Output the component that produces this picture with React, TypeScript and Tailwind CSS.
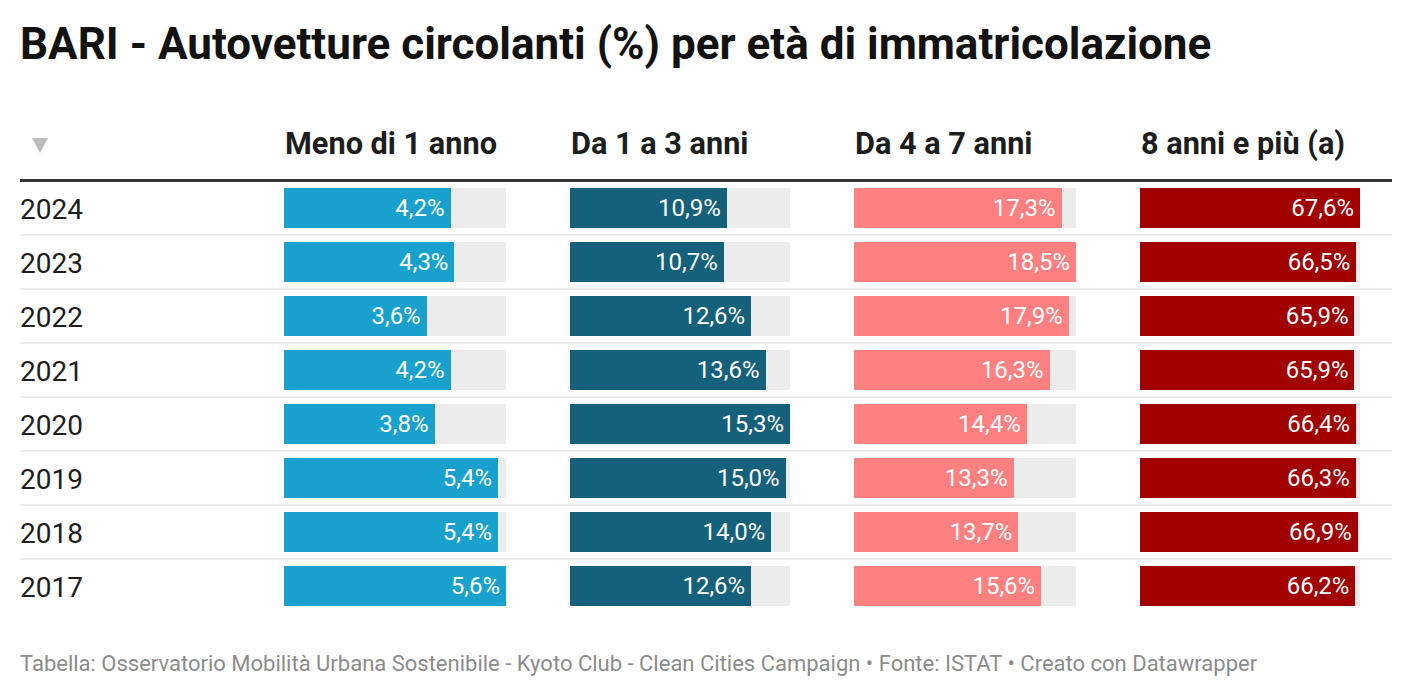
const columns = [
  { label: "Meno di 1 anno", color: "bg-[#18a1cd]", track: "w-[222px]" },
  { label: "Da 1 a 3 anni", color: "bg-[#15607a]", track: "w-[220px]" },
  { label: "Da 4 a 7 anni", color: "bg-[#ff8080]", track: "w-[222px]" },
  { label: "8 anni e più (a)", color: "bg-[#a10000]", track: "w-[220px]" },
];

const rows: { year: string; values: number[] }[] = [
  { year: "2024", values: [4.2, 10.9, 17.3, 67.6] },
  { year: "2023", values: [4.3, 10.7, 18.5, 66.5] },
  { year: "2022", values: [3.6, 12.6, 17.9, 65.9] },
  { year: "2021", values: [4.2, 13.6, 16.3, 65.9] },
  { year: "2020", values: [3.8, 15.3, 14.4, 66.4] },
  { year: "2019", values: [5.4, 15.0, 13.3, 66.3] },
  { year: "2018", values: [5.4, 14.0, 13.7, 66.9] },
  { year: "2017", values: [5.6, 12.6, 15.6, 66.2] },
];

const maxes = columns.map((_, i) => Math.max(...rows.map((r) => r.values[i])));

const fmt = (v: number) => v.toFixed(1).replace(".", ",") + "%";

const gridCols = "grid grid-cols-[264px_286px_284px_286px_252px]";

function Bar({ value, max, color, track }: { value: number; max: number; color: string; track: string }) {
  return (
    <div className={`h-[40px] bg-[#ececec] ${track}`}>
      <div
        className={`h-full flex items-center justify-end pr-[6px] text-white text-[24px] ${color}`}
        style={{ width: `${(value / max) * 100}%` }}
      >
        {fmt(value)}
      </div>
    </div>
  );
}

export default function App() {
  return (
    <div className="w-[1412px] h-[698px] bg-white px-[20px] font-['Roboto',sans-serif] text-[#1d1d1d] overflow-hidden">
      <h1 className="pt-[22px] text-[44px] leading-[44px] font-bold text-[#121212]">
        BARI - Autovetture circolanti (%) per età di immatricolazione
      </h1>

      <div className="mt-[63px]">
        <div className={`${gridCols} border-b-[3px] border-[#333] pb-[21px]`}>
          <div className="flex items-center pl-[12px] pt-[4px]">
            <svg width="16" height="15" viewBox="0 0 16 15">
              <polygon points="0,0 16,0 8,15" fill="#bbbbbb" />
            </svg>
          </div>
          {columns.map((c) => (
            <div key={c.label} className="text-[30.7px] leading-[29px] font-bold pl-[1px]">
              {c.label}
            </div>
          ))}
        </div>

        {rows.map((r, ri) => (
          <div
            key={r.year}
            className={`${gridCols} py-[6px] ${ri < rows.length - 1 ? "border-b-[2px] border-[#ececec]" : ""}`}
          >
            <div className="flex items-center pt-[3px] text-[28px] leading-[28px]">{r.year}</div>
            {columns.map((c, ci) => (
              <div key={c.label}>
                <Bar value={r.values[ci]} max={maxes[ci]} color={c.color} track={c.track} />
              </div>
            ))}
          </div>
        ))}
      </div>

      <p className="mt-[41px] text-[22px] leading-[22px] text-[#8c8c8c]">
        Tabella: Osservatorio Mobilità Urbana Sostenibile - Kyoto Club - Clean Cities Campaign • Fonte: ISTAT • Creato con Datawrapper
      </p>
    </div>
  );
}
